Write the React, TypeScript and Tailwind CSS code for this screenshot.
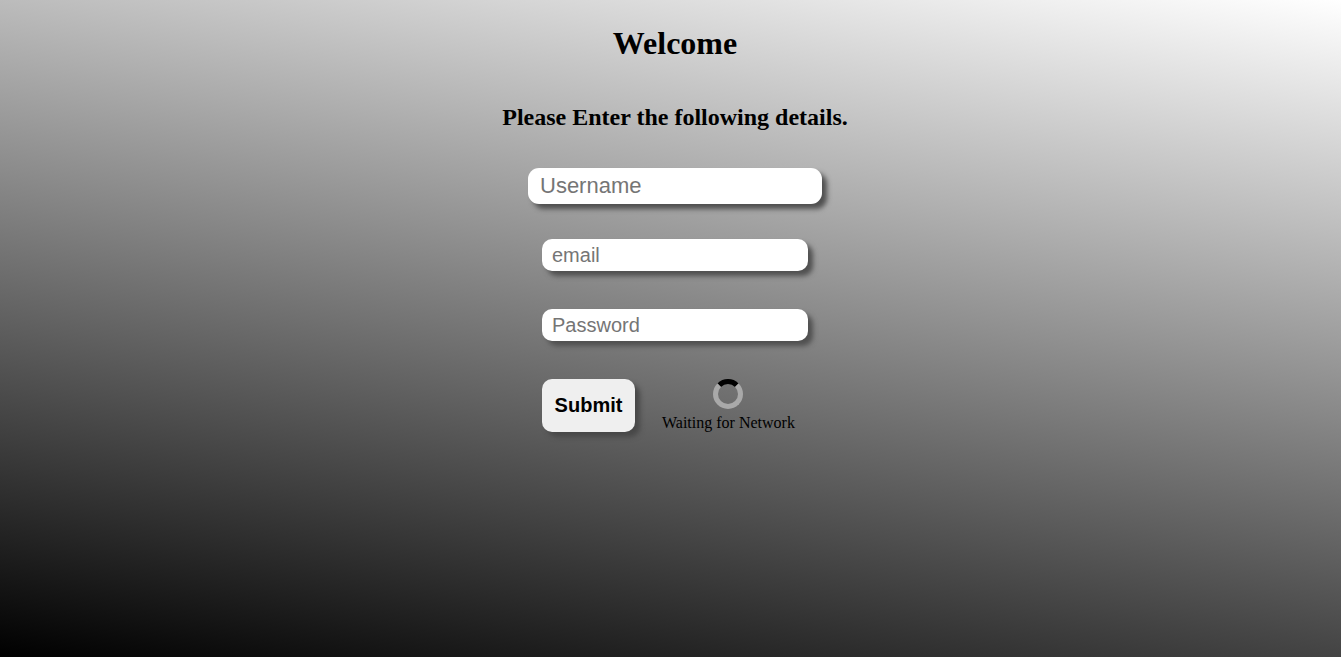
import React from "react";

const field =
  "bg-white font-['Liberation_Sans',Arial,sans-serif] text-black shadow-[5px_5px_5px_#505050] outline-none placeholder:text-[#757575]";
const regular = "h-8 w-[266px] rounded-[10px] px-[10px] text-xl";
const focused = "h-9 w-[294px] rounded-[11px] px-3 text-[22px]";

export default function App() {
  return (
    <main className="flex min-h-screen flex-col items-center bg-[linear-gradient(10deg,#000,#fff)] pt-[25px] pl-[9px] font-['Liberation_Serif','Times_New_Roman',serif] text-black">
      <h1 className="text-[32px] leading-[37px] font-bold">Welcome</h1>
      <h2 className="mt-[42px] text-2xl leading-[27px] font-bold">Please Enter the following details.</h2>
      <form className="mt-[37px] flex flex-col items-center gap-[35px]" onSubmit={(e) => e.preventDefault()}>
        <input aria-label="Username" placeholder="Username" className={`${field} ${focused}`} />
        <div className="flex flex-col items-start gap-[38px]">
          <input aria-label="email" type="email" placeholder="email" className={`${field} ${regular}`} />
          <input aria-label="Password" type="password" placeholder="Password" className={`${field} ${regular}`} />
          <div className="flex items-start gap-[27px]">
            <button
              type="submit"
              className="h-[53px] w-[93px] rounded-[10px] bg-[#efefef] pb-[2px] font-['Liberation_Sans',Arial,sans-serif] text-xl font-bold shadow-[5px_5px_5px_#484848]"
            >
              Submit
            </button>
            <div className="flex flex-col items-center gap-[5px]" role="status">
              <span className="size-[30px] rounded-full border-[5px] border-[#a9a9a9] border-t-black" />
              <span className="text-base leading-[18px] whitespace-nowrap">Waiting for Network</span>
            </div>
          </div>
        </div>
      </form>
    </main>
  );
}
